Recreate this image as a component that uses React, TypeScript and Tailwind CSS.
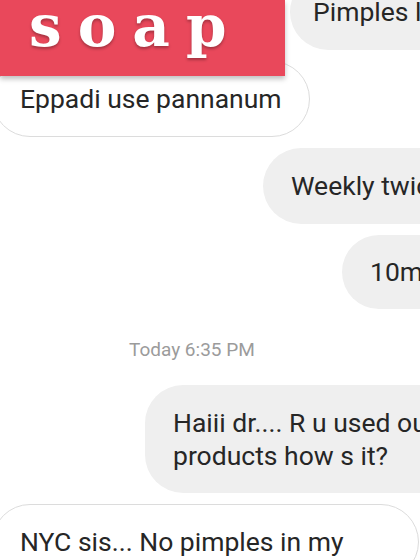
export default function App() {
  return (
    <div className="relative w-[420px] h-[560px] overflow-hidden bg-white text-[#262626] font-['Roboto','Liberation_Sans',sans-serif]">
      {/* chat thread */}
      <div className="flex flex-col gap-[11px] mt-[-26px]">
        <div className="flex pl-[290px]">
          <div className="flex-1 -mr-10 rounded-l-[38px] bg-[#efefef] pl-[23px] py-[21px] text-[26.5px] leading-[34px] whitespace-nowrap">
            Pimples la
          </div>
        </div>

        <div className="flex">
          <div className="ml-[-8px] rounded-full border border-[#dcdcdc] bg-white px-[27px] py-[20px] text-[26.5px] leading-[34px] whitespace-nowrap">
            Eppadi use pannanum
          </div>
        </div>

        <div className="flex pl-[263px]">
          <div className="flex-1 -mr-10 rounded-l-[38px] bg-[#efefef] pl-[28px] py-[21px] text-[26.5px] leading-[34px] whitespace-nowrap">
            Weekly twice
          </div>
        </div>

        <div className="flex pl-[342px]">
          <div className="flex-1 -mr-10 rounded-l-[38px] bg-[#efefef] pl-[28px] py-[20px] text-[26.5px] leading-[34px] whitespace-nowrap">
            10min
          </div>
        </div>
      </div>

      <div className="mt-[29px] mb-[23px] pl-[129px] text-[19px] leading-[24px] text-[#9b9b9b]">
        Today 6:35 PM
      </div>

      <div className="flex flex-col gap-[11px]">
        <div className="flex pl-[145px]">
          <div className="flex-1 -mr-10 rounded-l-[38px] bg-[#efefef] pl-[28px] py-[21px] text-[26.5px] leading-[33px] whitespace-nowrap">
            <div>Haiii dr.... R u used our</div>
            <div>products how s it?</div>
          </div>
        </div>

        <div className="flex">
          <div className="ml-[-8px] w-[427px] rounded-[38px] border border-[#dcdcdc] bg-white px-[27px] py-[20px] text-[26.5px] leading-[34px] whitespace-nowrap">
            NYC sis... No pimples in my
          </div>
        </div>
      </div>

      {/* overlay banner */}
      <div className="absolute left-0 top-0 w-[285px] h-[76px] bg-[#e9485b] shadow-[0_3px_5px_rgba(0,0,0,0.25)] pl-[29px]">
        <span className="block text-white font-bold text-[58px] leading-[52px] tracking-[16px] font-['DejaVu_Serif',serif] [text-shadow:0_2px_3px_rgba(0,0,0,0.3)]">
          soap
        </span>
      </div>
    </div>
  );
}
